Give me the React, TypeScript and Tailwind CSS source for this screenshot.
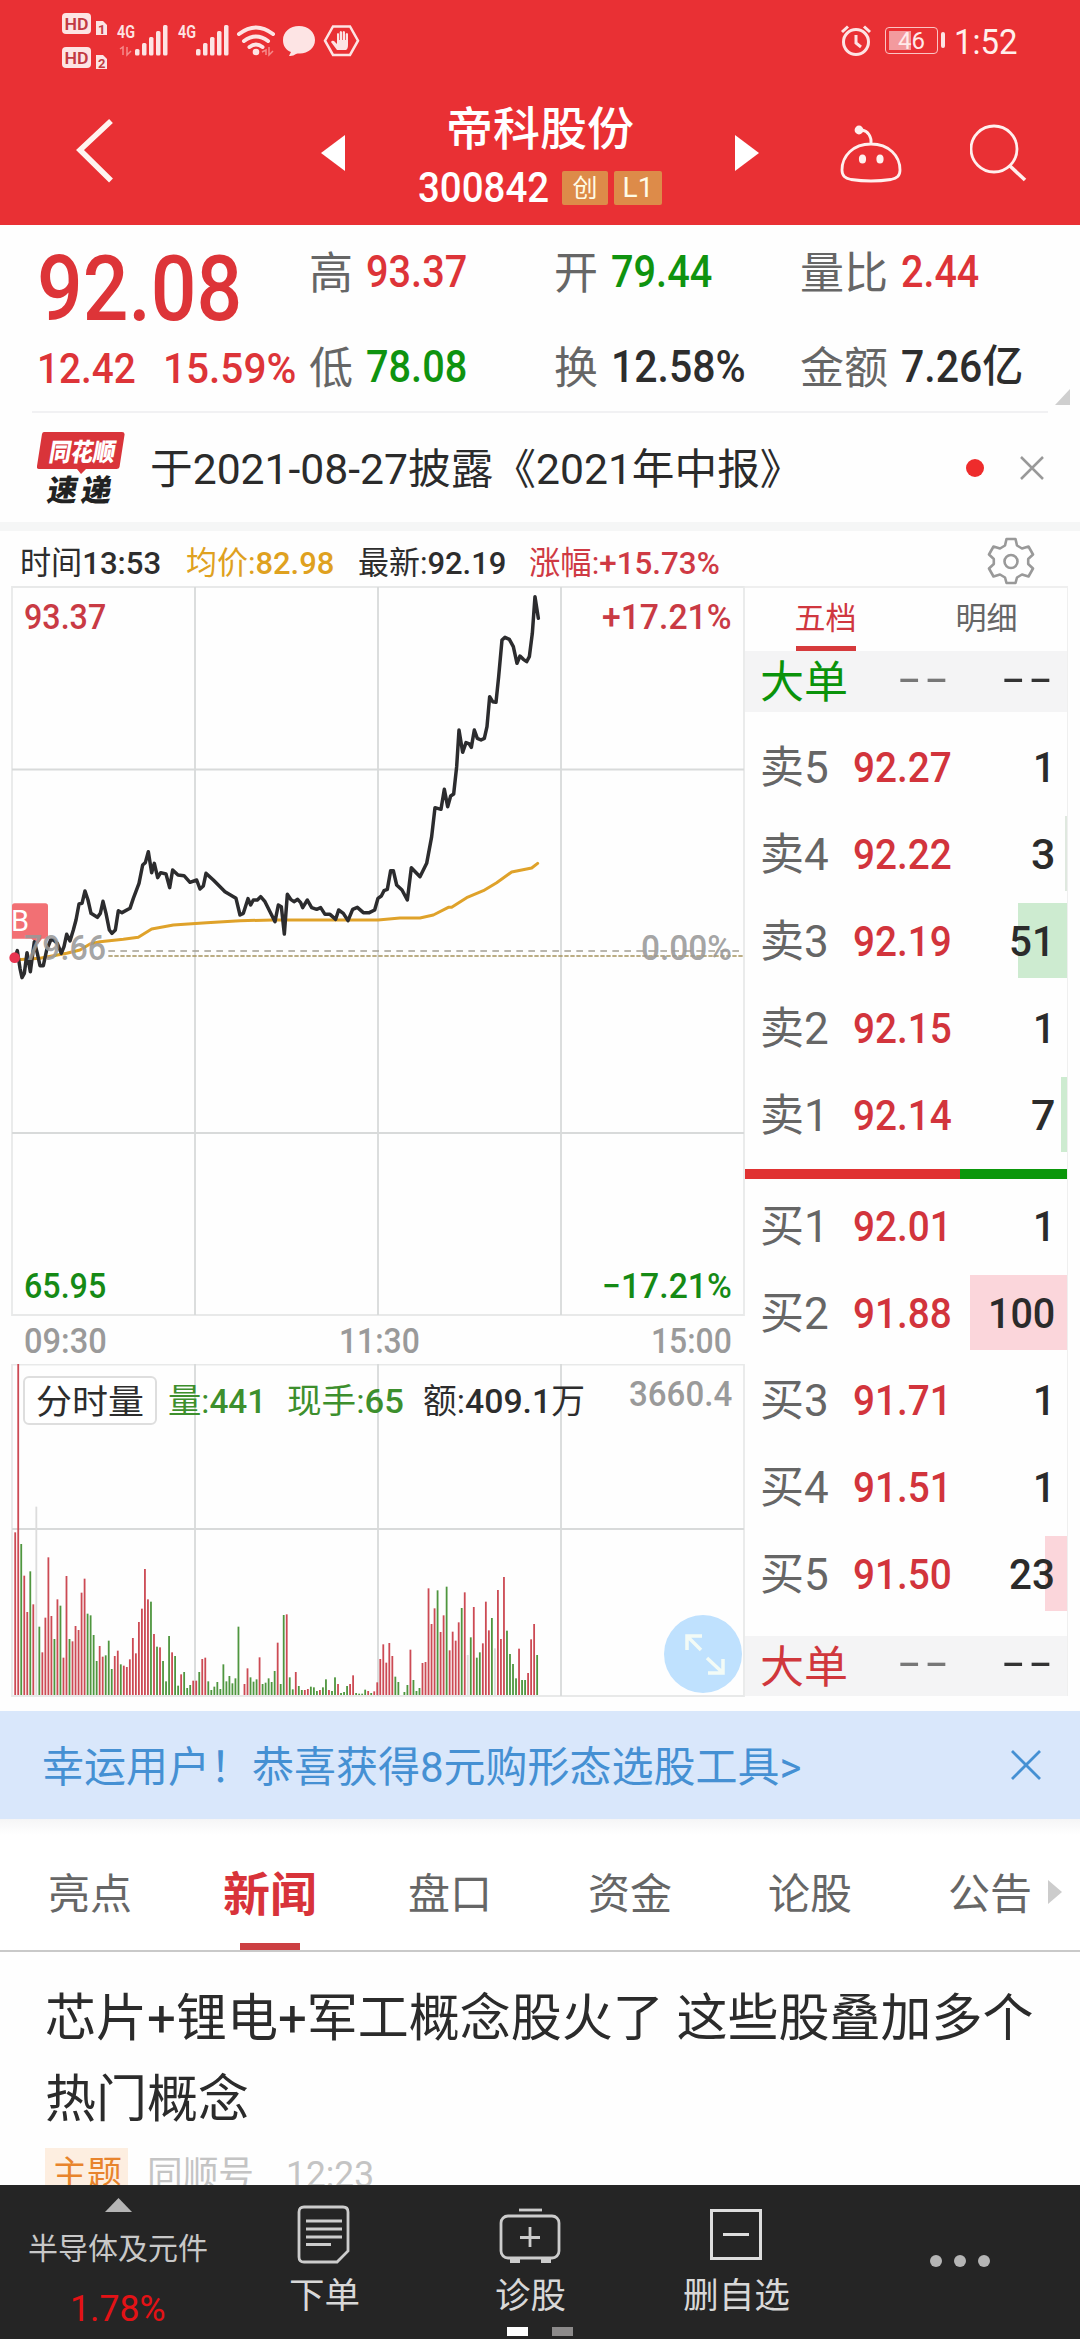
import { useLayoutEffect, useRef, useState, type ReactNode } from "react";

/** Single-line text condensed or widened horizontally to an exact width. */
function T({ w, className = "", children }: { w: number; className?: string; children: ReactNode }) {
  const ref = useRef<HTMLSpanElement>(null);
  const [k, setK] = useState(1);
  useLayoutEffect(() => {
    if (ref.current) setK(w / ref.current.offsetWidth);
  }, [w]);
  return (
    <span className="block shrink-0 leading-none" style={{ width: w }}>
      <span
        ref={ref}
        className={"block w-max origin-left whitespace-pre leading-none " + className}
        style={{ transform: `scaleX(${k})` }}
      >
        {children}
      </span>
    </span>
  );
}

function StatusBar() {
  return (
    <div className="flex h-[75px] items-start justify-between pl-[62px] pr-[62px]">
      <svg width="300" height="75" viewBox="62 0 300 75" fill="#fde4e4" fontFamily="Roboto">
        {[13, 47].map((y, i) => (
          <g key={y}>
            <rect x="62" y={y} width="29" height="21" rx="4" />
            <text x="64.500" y={y + 16.500} fontSize="17" fontWeight="600" fill="#c23a42" textLength="24" lengthAdjust="spacingAndGlyphs">HD</text>
            <path d={`M96 ${y + 8}h7l4 4v10h-11z`} />
            <text x="98" y={y + 20.500} fontSize="13" fontWeight="700" fill="#c23a42">{i + 1}</text>
          </g>
        ))}
        {[118, 179].map((x) => (
          <g key={x}>
            <text x={x - 1} y="38" fontSize="18" fontWeight="600" textLength="18" lengthAdjust="spacingAndGlyphs">4G</text>
            {[49, 43, 37, 31, 25].map((y, i) => (
              <rect key={y} x={x + 17 + i * 7} y={y} width="4.500" height={55.500 - y} rx="1.500" />
            ))}
          </g>
        ))}
        <path d="M120 49l3-2v8M127 47v8l4-4M262 52l4-2v5M269 47v8l4-4" stroke="#f58a8a" strokeWidth="1.500" fill="none" />
        <g fill="none" stroke="#fde4e4" strokeWidth="4" strokeLinecap="round">
          <path d="M239 34q17-13 34 0" />
          <path d="M244 41q12-9 24 0" />
          <path d="M249.500 47q6.500-5 13 0" />
        </g>
        <circle cx="256" cy="52" r="3.300" />
        <path d="M299 26c9 0 16 6 16 14s-7 13.500-15 13.500c-2 0-3 0-4 .5q-3 2.500-7 2l2-4c-5-2-8-6-8-12 0-8 7-14 16-14z" />
        <path d="M333 26.500h17l8 14.200-8 14.200h-17l-8-14.200z" fill="none" stroke="#fde4e4" strokeWidth="2.500" />
        <path d="M337 50l-6-8q1-2 3-1l3 3v-10q1-2 2 0v6h.7v-8q1.200-2 2.300 0v8h.7v-8q1.200-2 2.300 0v8h.7v-6q1.300-2 2.300 0v11q0 4-2 5z" />
      </svg>
      <div className="mt-6 flex items-start">
        <svg width="32" height="34" viewBox="0 0 32 34" fill="none" stroke="#fde4e4" strokeWidth="3">
          <circle cx="16" cy="18" r="12.500" />
          <path d="M2 8l6-5.500M30 8l-6-5.500M16 11v8l5 4" />
        </svg>
        <div className="relative ml-[13px] mt-[3px] flex h-[27px] w-[53px] items-center justify-center rounded-[4px] border-[1.500px] border-[#fbc4c4]">
          <span className="absolute left-[3px] top-[3px] h-[19px] w-[22px] bg-[#f39a9e]" />
          <span className="relative text-[24px] leading-none text-[#ffeaea]">46</span>
        </div>
        <span className="ml-[3px] mt-2 h-4 w-[4px] rounded-sm bg-[#fde4e4]" />
        <span className="ml-[9px] mt-px text-[35px] leading-none text-[#fff0ec]"><T w={64}>1:52</T></span>
      </div>
    </div>
  );
}

function TitleBar() {
  return (
    <div className="flex h-[150px] text-white">
      <svg width="140" height="150" viewBox="0 0 140 150" fill="none" stroke="#fff4f0" strokeWidth="5.500">
        <path d="M111 46L80 75l31 30.500" />
      </svg>
      <svg className="ml-[181px]" width="24" height="150" viewBox="0 0 24 150" fill="#fff"><path d="M24 60v36L0 78z" /></svg>
      <div className="ml-[73px] flex w-[244px] flex-col items-center pt-[31px]">
        <div className="text-[46px] font-medium"><T w={188}>帝科股份</T></div>
        <div className="mt-[15px] flex w-full items-center gap-[6px] text-[42px] font-medium">
          <T w={131}>300842</T>
          <span className="ml-[7px] flex h-[34px] w-[46px] items-center justify-center rounded-[2px] bg-[#dd8b49] text-[25px] font-normal leading-none text-[#fffbe6]">创</span>
          <span className="flex h-[34px] w-[48px] items-center justify-center rounded-[2px] bg-[#dd8b49] text-[28px] font-normal leading-none text-[#fffbe6]">L1</span>
        </div>
      </div>
      <svg className="ml-[73px]" width="24" height="150" viewBox="0 0 24 150" fill="#fff"><path d="M0 60v36l24-18z" /></svg>
      <svg className="ml-[80px]" width="64" height="150" viewBox="0 2 64 150" fill="none" stroke="#fff0ee" strokeWidth="2.800">
        <path d="M32 71c-18 0-29 12-29 26 0 6 3 8 9 9.500q20 3 40 0c6-1.500 9-3.500 9-9.500 0-14-11-26-29-26zM32 71c1-7-3-13-9-14" />
        <circle cx="20" cy="57" r="3" fill="#fff0ee" />
        <ellipse cx="23.500" cy="86" rx="2.200" ry="3.200" fill="#fff0ee" />
        <ellipse cx="41" cy="86" rx="2.200" ry="3.200" fill="#fff0ee" />
      </svg>
      <svg className="ml-[67px]" width="60" height="150" viewBox="0 0 60 150" fill="none" stroke="#fff0ee" strokeWidth="2.800">
        <circle cx="24" cy="74" r="23" />
        <path d="M40 91l15 14" strokeWidth="3.600" />
      </svg>
    </div>
  );
}

const RED = "text-[#dd3438]";
const GREEN = "text-[#0f930f]";
const DARK = "text-[#2d2d2d]";

function Stat({ l, lw, v, vw, c }: { l: string; lw: number; v: string; vw: number; c: string }) {
  return (
    <div className="flex items-center pt-[2px]">
      <div className="mt-[3px] text-[44px] text-[#666]"><T w={lw}>{l}</T></div>
      <div className={"ml-[13px] text-[44px] font-medium " + c}><T w={vw}>{v}</T></div>
    </div>
  );
}

function Quote() {
  return (
    <section className="flex h-[186px]">
      <div className={"w-[309px] pl-[37px] pt-[21px] " + RED}>
        <div className="flex h-[87px] items-center text-[91px] font-medium"><T w={205}>92.08</T></div>
        <div className="flex h-[70px] items-center text-[43px] font-medium">
          <T w={99}>12.42</T>
          <span className="w-[27px]" />
          <T w={133}>15.59%</T>
        </div>
      </div>
      <div className="grid grid-cols-[245px_246px_270px] grid-rows-[92px_98px]">
        <Stat l="高" lw={44} v="93.37" vw={101} c={RED} />
        <Stat l="开" lw={44} v="79.44" vw={101} c={GREEN} />
        <Stat l="量比" lw={88} v="2.44" vw={78} c={RED} />
        <Stat l="低" lw={44} v="78.08" vw={101} c={GREEN} />
        <Stat l="换" lw={44} v="12.58%" vw={135} c={DARK} />
        <div className="flex items-center">
          <Stat l="金额" lw={88} v="7.26亿" vw={122} c={DARK} />
          <svg className="ml-[32px] mt-[62px]" width="17" height="18" viewBox="0 0 17 18"><path d="M17 0v18H0z" fill="#cfcfcf" /></svg>
        </div>
      </div>
    </section>
  );
}

function Notice() {
  return (
    <section className="mx-[32px] flex h-[111px] items-center border-t-2 border-[#f1f1f3]">
      <svg className="ml-[5px]" width="90" height="74" viewBox="0 0 90 74" fontFamily="'Noto Sans CJK SC'" fontWeight="900">
        <path d="M7 1h78q3 0 2.500 3l-5 32q-.5 2-3 2H49l-5 5-4-5H2q-2.500 0-2-3L5 3q.5-2 2-2z" fill="#d9343a" />
        <text transform="translate(11 30) skewX(-10)" fontSize="25" textLength="66" lengthAdjust="spacingAndGlyphs" fill="#fff">同花顺</text>
        <text transform="translate(9 70) skewX(-10)" fontSize="30" textLength="64" fill="#222">速递</text>
      </svg>
      <div className="ml-[23px] mt-[5px] text-[42px] text-[#2b2b2b]"><T w={652}>于2021-08-27披露《2021年中报》</T></div>
      <span className="ml-[164px] h-[18px] w-[18px] rounded-full bg-[#ee2c2c]" />
      <svg className="ml-[36px]" width="24" height="24" viewBox="0 0 24 24" stroke="#999" strokeWidth="2.500"><path d="M1 1l22 22M23 1L1 23" /></svg>
    </section>
  );
}

function InfoLine() {
  return (
    <div className="flex h-[55px] items-center pl-[20px] pt-[8px] text-[32px]">
      <div className="text-[#2d2d2d]"><T w={141}>时间<span className="font-medium">13:53</span></T></div>
      <div className="ml-[25px] text-[#dfa11f]"><T w={148}>均价:<span className="font-medium">82.98</span></T></div>
      <div className="ml-[24px] text-[#2d2d2d]"><T w={148}>最新:<span className="font-medium">92.19</span></T></div>
      <div className="ml-[23px] text-[#cf3a44]"><T w={191}>涨幅:<span className="font-medium">+15.73%</span></T></div>
      <svg className="ml-[267px] mt-[-4px]" width="48" height="48" viewBox="0 0 48 48" fill="none" stroke="#999" strokeWidth="2.600" strokeLinejoin="round">
        <path d="M19.500 2h9l1.500 6.500 5 3 6.500-2 4.500 8-4.800 4.500v5l4.800 4.500-4.500 8-6.500-2-5 3-1.500 5.500h-9L18 40.500l-5-3-6.500 2-4.500-8L6.800 27v-5L2 17.500l4.500-8 6.500 2 5-3z" />
        <circle cx="24" cy="24.500" r="6.500" />
      </svg>
    </div>
  );
}

const PRICE =
  "44,1135 52,1112 60,1165 66,1193 73,1180 81,1118 91,1175 103,1085 112,1120 120,1157 130,1157 140,1110 152,1080 160,1080 172,1090 184,1120 192,1100 200,1063 210,1083 220,1050 228,1020 237,972 246,970 255,933 264,960 273,1000 292,1012 301,1000 309,964 318,1000 328,1050 336,1060 346,1050 355,992 366,998 390,985 400,955 417,910 428,855 436,848 445,815 455,878 463,850 473,893 482,878 498,882 509,923 518,870 534,885 552,887 570,907 590,900 600,927 610,918 618,880 640,900 675,935 708,955 720,1005 730,1000 744,956 752,975 760,960 772,960 782,950 795,965 810,995 825,1025 835,975 844,980 853,1062 862,943 872,958 882,965 893,958 902,968 908,983 922,960 935,983 950,988 962,983 975,1003 990,1003 1007,1018 1016,990 1030,1000 1044,1022 1058,988 1072,982 1090,998 1108,998 1124,990 1134,955 1144,948 1152,932 1162,928 1172,872 1180,872 1190,915 1206,930 1222,960 1234,863 1260,890 1280,850 1295,770 1305,683 1323,688 1333,628 1343,680 1352,648 1361,642 1370,560 1377,450 1388,517 1398,488 1408,492 1414,502 1423,450 1432,475 1443,480 1453,475 1461,440 1469,350 1478,365 1488,367 1496,290 1506,180 1515,172 1528,178 1540,200 1551,250 1560,228 1570,238 1580,245 1588,230 1597,160 1605,50 1615,115";
const AVERAGE =
  "40,1140 120,1135 200,1120 240,1110 270,1092 300,1085 370,1078 415,1072 455,1047 520,1035 620,1028 720,1022 820,1020 1134,1020 1200,1014 1260,1014 1300,1005 1345,982 1355,982 1400,953 1450,932 1490,908 1535,876 1595,864 1613,850";

function PriceChart() {
  return (
    <div className="relative h-[730px]">
      <svg className="block" width="745" height="730" viewBox="0 586 745 730">
        <g stroke="#d8dada" strokeWidth="1.800" fill="none">
          <path d="M12 587H744V1315H12z" stroke="#e8e9e9" />
          <path d="M12 769.500H744M12 1133H744M195 587V1315M378 587V1315M561 587V1315" />
        </g>
        <g transform="translate(0 580) scale(.33333)" fill="none" strokeLinejoin="round" strokeLinecap="round">
          <path d="M325 1113H2232" stroke="#a29f92" strokeWidth="5" strokeDasharray="20 16" strokeLinecap="butt" />
          <path d="M325 1128H2232" stroke="#a5925c" strokeWidth="5" strokeDasharray="13 5" strokeLinecap="butt" />
          <polyline points={AVERAGE} stroke="#dfa22a" strokeWidth="9" />
          <path d="M44 970h92q8 0 8 8v90q0 8-8 8h-10l-12 16-20-16H36v-98q0-8 8-8z" fill="#f27074" />
          <polyline points={PRICE} stroke="#2c2c2e" strokeWidth="10.500" />
          <circle cx="44" cy="1133" r="16" fill="#e83450" />
        </g>
        <g fill="#999" fillOpacity=".9" fontFamily="Roboto" fontSize="35" fontWeight="500">
          <text x="24" y="960" textLength="82" lengthAdjust="spacingAndGlyphs">79.66</text>
          <text x="641" y="960" textLength="91" lengthAdjust="spacingAndGlyphs">0.00%</text>
        </g>
        <text x="11" y="931" fontFamily="Roboto" fontSize="29" fill="#fff">B</text>
      </svg>
      <div className="absolute inset-x-[24px] top-[14px] flex justify-between text-[35px] font-medium leading-none text-[#c93a44]">
        <T w={82}>93.37</T>
        <div className="-mr-[11px]"><T w={130}>+17.21%</T></div>
      </div>
      <div className="absolute inset-x-[24px] bottom-[12px] flex justify-between text-[35px] font-medium leading-none text-[#158a15]">
        <T w={82}>65.95</T>
        <div className="-mr-[11px]"><T w={130}>−17.21%</T></div>
      </div>
    </div>
  );
}

/* One entry per minute: colour letter and height of the bar. */
const VOLUME =
  "r488 r993 g453 r358 r249 g371 r272 x565 g205 r128 r232 r413 r237 g168 r287 g268 r112 r357 g168 r161 r207 r195 r307 r349 g244 g239 g180 g102 r147 r115 g119 g163 g78 r117 r133 g92 r88 r84 r107 r171 r125 r219 r259 r378 r287 g280 r183 g145 r143 g102 g41 g177 r128 g117 g28 r62 g69 g21 g30 r43 r43 g69 r108 r112 g41 g15 g25 g39 g18 g92 g41 g57 g35 g50 g205 g0 r33 r80 g53 g40 g47 r113 g33 g37 g50 g39 g72 r157 g33 g240 r242 g53 g17 r69 g27 g15 r15 r18 g25 g23 g12 r15 g23 g47 r15 g12 g53 r33 g6 g9 g27 r33 r59 g6 g4 g4 g16 r12 g6 r11 r38 r108 r152 r97 r156 r117 g55 g39 g0 g9 g30 r136 g45 g12 g21 r96 r99 r320 r213 r260 g314 r189 r239 g325 r134 r190 r163 r218 g261 r308 x120 g173 r264 g112 g128 r155 r280 r194 g231 x140 r315 r168 r354 g193 g123 g93 g50 r139 g45 g45 r66 r167 r213 g120".split(" ");

const BAR_FILL: Record<string, string> = { r: "#cc4a54", g: "#4f963f", x: "#dcdcdc" };

function VolumeChart() {
  return (
    <div className="relative h-[333px]">
      <svg className="block" width="745" height="333" viewBox="0 1364 745 333">
        <g stroke="#d8dada" strokeWidth="1.800" fill="none">
          <path d="M12 1364.500H744V1696H12z" stroke="#e8e9e9" />
          <path d="M12 1529H744M195 1364V1696M378 1364V1696M561 1364V1696" />
        </g>
        {VOLUME.map((v, i) => {
          const h = Number(v.slice(1)) / 3;
          return <rect key={i} x={14.300 + i * 3.017} y={1695 - h} width="1.800" height={h} fill={BAR_FILL[v[0]]} />;
        })}
        <circle cx="703" cy="1654" r="39" fill="#bfe1fe" />
        <g stroke="#f3fbf6" strokeWidth="3.500" fill="none">
          <path d="M702 1636h-15v14M687 1636l14 14M708 1673h15v-14M723 1673l-16-15" />
        </g>
      </svg>
      <div className="absolute left-[23px] top-[12px] flex h-[49px] items-center text-[34px]">
        <div className="flex h-[49px] w-[134px] items-center justify-center rounded-[6px] border-2 border-[#dedede] bg-white pt-[3px] text-[#2d2d2d]"><T w={108}>分时量</T></div>
        <div className="ml-[11px] text-[#3d8f2d]"><T w={98}>量:<span className="font-medium">441</span></T></div>
        <div className="ml-[21px] text-[#3d8f2d]"><T w={117}>现手:<span className="font-medium">65</span></T></div>
        <div className="ml-[19px] text-[#2d2d2d]"><T w={162}>额:<span className="font-medium">409.1</span>万</T></div>
        <div className="-mt-[12px] ml-[44px] text-[35px] font-medium text-[#9a9a9a]"><T w={103}>3660.4</T></div>
      </div>
    </div>
  );
}

function Charts() {
  return (
    <div className="w-[745px]">
      <PriceChart />
      <div className="flex h-[48px] items-center pl-[24px] pt-[2px] text-[35px] font-medium text-[#9a9a9a]">
        <T w={83}>09:30</T>
        <span className="w-[232px]" />
        <T w={81}>11:30</T>
        <span className="w-[231px]" />
        <T w={81}>15:00</T>
      </div>
      <VolumeChart />
    </div>
  );
}

function BigOrder({ c, h }: { c: string; h: string }) {
  return (
    <div className={"flex items-center bg-[#f4f4f5] pl-[15px] text-[44px] " + h}>
      <div className={"mt-[3px] " + c}><T w={88}>大单</T></div>
      <div className="ml-[51px] mt-[-6px] tracking-[4px] text-[#777]"><T w={54}>--</T></div>
      <div className="ml-[50px] mt-[-6px] tracking-[4px] text-[#333]"><T w={54}>--</T></div>
    </div>
  );
}

type Level = { l: string; p: string; v: string; vw: number; bar?: string };

const ASKS: Level[] = [
  { l: "卖5", p: "92.27", v: "1", vw: 22 },
  { l: "卖4", p: "92.22", v: "3", vw: 24, bar: "w-[2px] bg-[#dfe8df]" },
  { l: "卖3", p: "92.19", v: "51", vw: 46, bar: "w-[49px] bg-[#cdebd0]" },
  { l: "卖2", p: "92.15", v: "1", vw: 22 },
  { l: "卖1", p: "92.14", v: "7", vw: 24, bar: "w-[6px] bg-[#cdebd0]" },
];
const BIDS: Level[] = [
  { l: "买1", p: "92.01", v: "1", vw: 22 },
  { l: "买2", p: "91.88", v: "100", vw: 67, bar: "w-[97px] bg-[#fbd6db]" },
  { l: "买3", p: "91.71", v: "1", vw: 22 },
  { l: "买4", p: "91.51", v: "1", vw: 22 },
  { l: "买5", p: "91.50", v: "23", vw: 46, bar: "w-[22px] bg-[#fbd6db]" },
];

function LevelRow({ l, p, v, vw, bar }: Level) {
  return (
    <div className="relative flex h-[87px] items-center pl-[15px] pr-[12px] pt-[2px] text-[44px]">
      {bar && <span className={"absolute right-0 top-[6px] h-[75px] " + bar} />}
      <div className="text-[#666]"><T w={69}>{l}</T></div>
      <div className="ml-[24px] text-[43px] font-medium text-[#d2343c]"><T w={99}>{p}</T></div>
      <div className="relative ml-auto text-[43px] font-medium text-[#2b2b2b]"><T w={vw}>{v}</T></div>
    </div>
  );
}

function OrderBook() {
  return (
    <div className="h-[1110px] w-[323px] border-r border-t-2 border-[#efefef]">
      <div className="flex h-[63px] text-[31px] leading-none">
        <div className="flex w-[161px] flex-col items-center justify-between pt-[15px] text-[#d0373f]">
          五档
          <span className="h-[5px] w-[60px] bg-[#d63a3c]" />
        </div>
        <div className="flex w-[161px] justify-center pt-[15px] text-[#666]">明细</div>
      </div>
      <BigOrder c="text-[#0a930a]" h="h-[61px]" />
      <div className="mt-[11px]">{ASKS.map((r) => <LevelRow key={r.l} {...r} />)}</div>
      <div className="mt-[11px] flex h-[10px]">
        <span className="w-[215px] bg-[#e03232]" />
        <span className="grow bg-[#0b970b]" />
      </div>
      <div className="mt-[3px]">{BIDS.map((r) => <LevelRow key={r.l} {...r} />)}</div>
      <div className="mt-[19px]"><BigOrder c="text-[#d0373c]" h="h-[60px]" /></div>
    </div>
  );
}

function Banner() {
  return (
    <div className="mt-[14px] flex h-[108px] items-center bg-[#d9e7fb] pl-[42px] text-[42px] text-[#4590d3]">
      <div className="mt-[6px]"><T w={760}>幸运用户！恭喜获得8元购形态选股工具&gt;</T></div>
      <svg className="ml-[209px]" width="30" height="30" viewBox="0 0 30 30" stroke="#4590d3" strokeWidth="2.800"><path d="M1 1l28 28M29 1L1 29" /></svg>
    </div>
  );
}

function Tabs() {
  return (
    <div className="relative flex h-[133px] items-center border-b-2 border-[#c9c9c9] bg-linear-to-b from-[#f5f5f6] to-white to-12% pt-[20px] text-[42px] text-[#666]">
      <div className="flex w-[180px] justify-center"><T w={84}>亮点</T></div>
      <div className="flex w-[180px] justify-center text-[47px] font-bold text-[#d8333a]"><T w={94}>新闻</T></div>
      {["盘口", "资金", "论股", "公告"].map((t) => (
        <div key={t} className="flex w-[180px] justify-center"><T w={84}>{t}</T></div>
      ))}
      <svg className="absolute left-[1048px] top-[61px]" width="14" height="24" viewBox="0 0 14 24"><path d="M0 0l14 12L0 24z" fill="#ccc" /></svg>
      <span className="absolute bottom-0 left-[240px] h-[7px] w-[60px] bg-[#cc3f42]" />
    </div>
  );
}

function Article() {
  return (
    <article className="h-[233px] overflow-hidden pl-[45px] pt-[26px] text-[51px] text-[#2b2b2b]">
      <div className="flex h-[81px] items-center"><T w={989}>芯片+锂电+军工概念股火了 这些股叠加多个</T></div>
      <div className="flex h-[81px] items-center"><T w={204}>热门概念</T></div>
      <div className="flex pt-[8px] text-[36px]">
        <div className="flex h-[60px] w-[83px] items-start justify-center bg-[#fdeee0] pt-[9px] text-[#e8842c]"><T w={70}>主题</T></div>
        <div className="ml-[19px] pt-[9px] text-[#c4c4c4]"><T w={107}>同顺号</T></div>
        <div className="ml-[32px] pt-[8px] text-[37px] text-[#c4c4c4]"><T w={88}>12:23</T></div>
      </div>
    </article>
  );
}

function BottomBar() {
  return (
    <nav className="relative flex h-[154px] bg-[#252525] text-[35px] leading-none text-[#d8d8d8]">
      <div className="flex w-[236px] flex-col items-center">
        <svg className="mt-[13px]" width="27" height="14" viewBox="0 0 27 14"><path d="M13.500 0L27 14H0z" fill="#b5b5b5" /></svg>
        <div className="mt-[22px] text-[30px] text-[#c8c8c8]"><T w={180}>半导体及元件</T></div>
        <div className="mt-[27px] text-[36px] text-[#e31216]"><T w={96}>1.78%</T></div>
      </div>
      <div className="flex w-[176px] flex-col items-center">
        <svg className="mt-[20px]" width="54" height="60" viewBox="0 0 54 60" fill="none" stroke="#ccc" strokeWidth="2.800">
          <path d="M7 2h39q5 0 5 5v39L40 57H7q-5 0-5-5V7q0-5 5-5z" />
          <path d="M9 16h36M9 24h36M9 32h36M9 39.500h25" />
        </svg>
        <div className="mt-[14px]"><T w={71}>下单</T></div>
      </div>
      <div className="flex w-[236px] flex-col items-center">
        <svg className="mt-[20px]" width="62" height="60" viewBox="0 0 62 60" fill="none" stroke="#ccc" strokeWidth="2.800">
          <path d="M20 5h23" />
          <rect x="2" y="11" width="58" height="42" rx="7" />
          <path d="M31 22v20M21 32.500h20" />
          <path d="M11 56h10M42 56h10" strokeWidth="4" />
        </svg>
        <div className="mt-[14px]"><T w={71}>诊股</T></div>
      </div>
      <div className="flex w-[176px] flex-col items-center">
        <svg className="mt-[20px]" width="54" height="60" viewBox="0 0 54 60" fill="none" stroke="#ddd" strokeWidth="3">
          <path d="M2.500 5.500h49v48h-49zM14 29.500h26" />
        </svg>
        <div className="mt-[14px]"><T w={107}>删自选</T></div>
      </div>
      <svg className="ml-[106px] mt-[69px]" width="62" height="14" viewBox="0 0 62 14" fill="#b5b5b5">
        <circle cx="6" cy="7" r="6" /><circle cx="30" cy="7" r="6" /><circle cx="54" cy="7" r="6" />
      </svg>
      <div className="absolute left-[507px] top-[142px] flex gap-6">
        <span className="h-[9px] w-[21px] bg-white" />
        <span className="h-[9px] w-[21px] bg-[#8c8a8a]" />
      </div>
    </nav>
  );
}

export default function App() {
  return (
    <div className="h-[2340px] w-[1080px] overflow-hidden bg-[#fefefe] font-['Roboto','Noto_Sans_CJK_SC',sans-serif]">
      <header className="h-[225px] bg-[#e93034]">
        <StatusBar />
        <TitleBar />
      </header>
      <Quote />
      <Notice />
      <div className="h-[9px] bg-[#f5f6f6]" />
      <InfoLine />
      <main className="flex">
        <Charts />
        <OrderBook />
      </main>
      <Banner />
      <Tabs />
      <Article />
      <BottomBar />
    </div>
  );
}
